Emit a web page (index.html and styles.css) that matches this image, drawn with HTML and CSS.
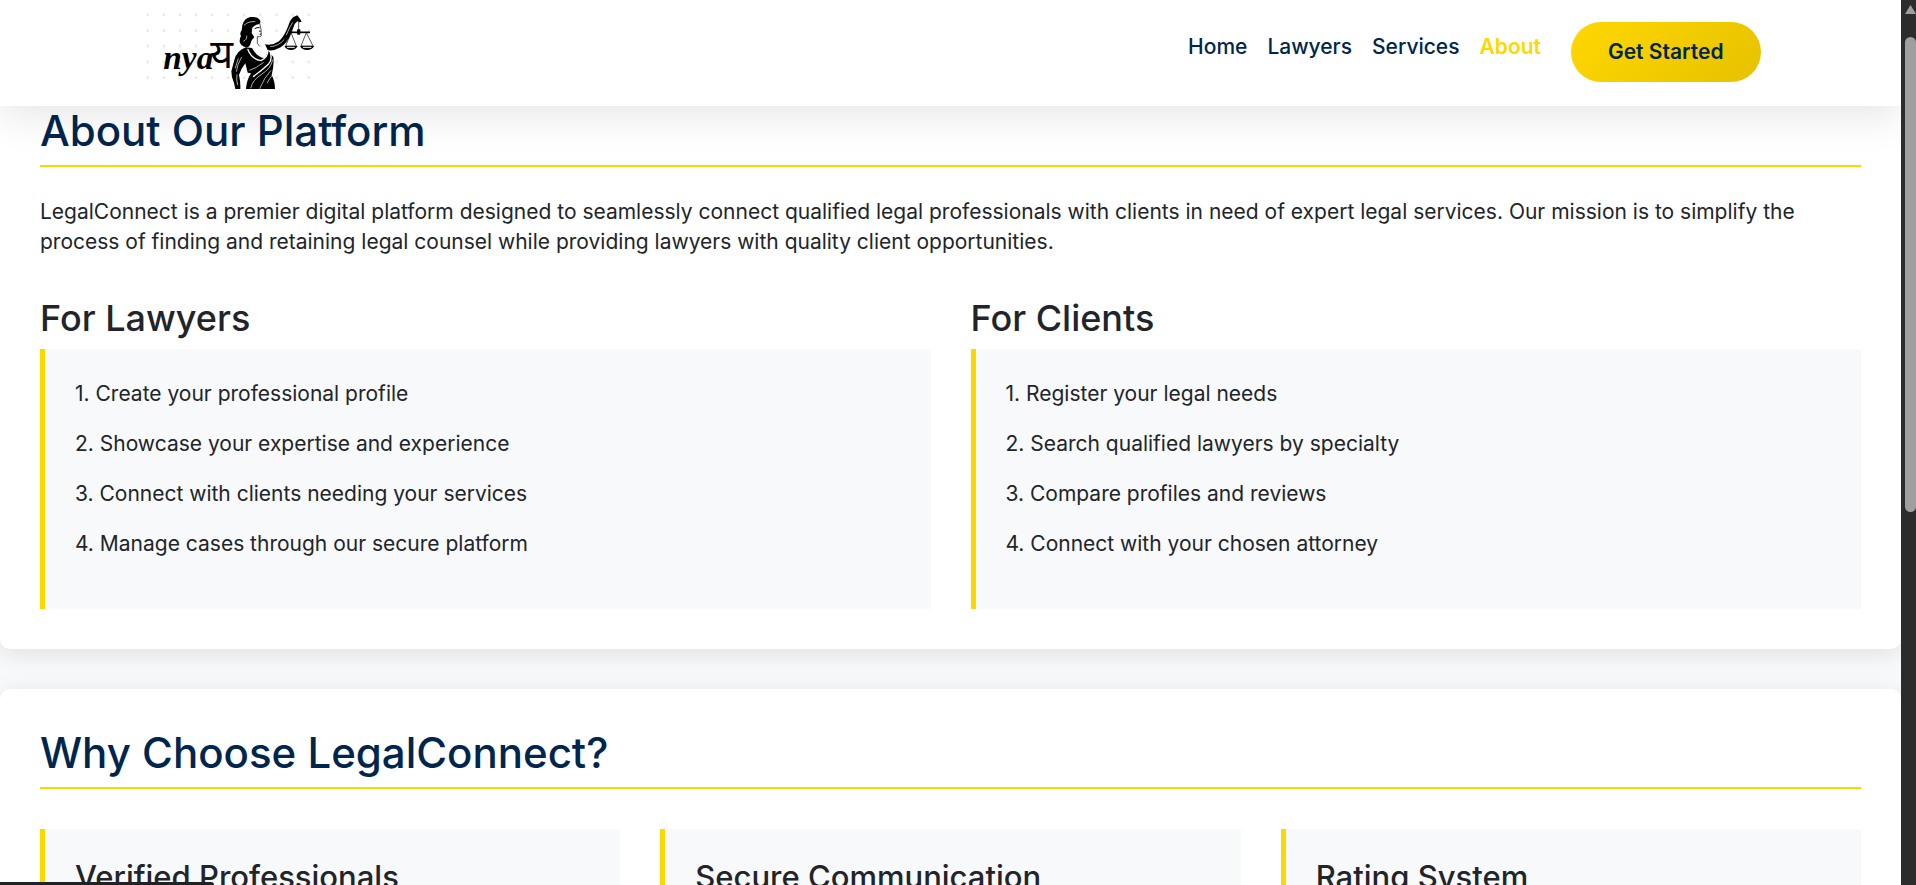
FILE: index.html
```html
<!DOCTYPE html>
<html lang="en">
<head>
<meta charset="utf-8">
<meta name="viewport" content="width=device-width, initial-scale=1">
<title>About - LegalConnect</title>
<link rel="stylesheet" href="styles.css">
</head>
<body>
<div class="page">
  <header class="header">
    <div class="container">
      <a class="brand" href="#" aria-label="nyay home">
        <svg class="logo" viewBox="30 24 540 246" width="180" height="82">
          <defs>
            <pattern id="dots" x="42" y="37" width="48.3" height="47" patternUnits="userSpaceOnUse">
              <circle cx="8" cy="8" r="4" fill="#e6e6e6"/>
            </pattern>
          </defs>
          <rect x="42" y="37" width="500" height="205" fill="url(#dots)"/>
          <text class="logo-script" x="97" y="206">nya</text>
          <text class="logo-deva" x="238" y="204">य</text>
          <path d="M362 84L386 72L391 91L395 98L391 103L390 111L380 114L379 132L392 143L360 150L352 135L364 118Z" fill="#fff"/>
          <path d="M386 70L390 88L391 107Q388 112 379 110L379 130L386 139" fill="none" stroke="#000" stroke-width="2"/>
          <path d="M371 86q8-5 15-3M384 93l5 1M386 103l4-1" fill="none" stroke="#000" stroke-width="3"/>
          <path d="M334 76Q340 54 358 51Q379 49 386 59Q391 66 385 72Q371 74 364 83L362 99L370 112Q361 119 359 130Q356 143 345 142Q329 138 326 126Q325 116 330 108Q325 101 332 91Z"/>
          <path d="M339 76Q352 63 373 65M337 124Q349 119 347 107" fill="none" stroke="#fff" stroke-width="2"/>
          <path d="M345 142Q318 151 310 180L301 214Q301 232 309 249L313 267L328 267Q329 246 324 225Q330 206 343 190L350 218L360 220Q347 240 345 267L432 267Q432 244 422 225Q430 195 427 171L410 150L402 133Q425 137 444 124Q461 107 472 77Q478 59 486 52L499 46L508 58L512 65L505 67L499 64L491 72L480 101Q469 128 449 142Q431 153 412 151L402 174Q380 174 363 144Z"/>
          <path d="M350 147Q362 178 390 182Q410 174 411 151M418 158Q425 179 412 193Q391 213 366 230M378 142Q390 149 404 163" fill="none" stroke="#fff" stroke-width="4"/>
          <path d="M322 175Q316 192 313 205M332 171Q319 192 316 215M318 223Q315 240 320 255M355 211Q376 205 398 187M425 179Q420 206 390 224Q365 240 359 265M420 211Q400 232 386 266M428 221Q415 235 408 250M418 140Q442 139 460 118M466 105Q475 82 485 67" fill="none" stroke="#fff" stroke-width="2"/>
          <path d="M503 66V92" fill="none" stroke="#000" stroke-width="2"/>
          <path d="M475 97H537" fill="none" stroke="#000" stroke-width="5"/>
          <rect x="498" y="88" width="10" height="16" rx="3"/>
          <path d="M480 98L464 138H496ZM526 98L510 138H546Z" fill="none" stroke="#000" stroke-width="2"/>
          <path d="M460 138H500Q494 150 480 150Q466 150 460 138ZM507 138H550Q543 150 528 150Q513 150 507 138Z"/>
          <path d="M468 142H491M516 142H541" stroke="#fff" stroke-width="3"/>
        </svg>
      </a>
      <nav class="nav">
        <a href="#">Home</a>
        <a href="#">Lawyers</a>
        <a href="#">Services</a>
        <a class="active" href="#" aria-current="page">About</a>
        <button class="cta" type="button">Get Started</button>
      </nav>
    </div>
  </header>

  <main class="main">
    <section class="panel">
      <h2>About Our Platform</h2>
      <p class="intro">LegalConnect is a premier digital platform designed to seamlessly connect qualified legal professionals with clients in need of expert legal services. Our mission is to simplify the process of finding and retaining legal counsel while providing lawyers with quality client opportunities.</p>
      <div class="grid two">
        <div>
          <h3>For Lawyers</h3>
          <div class="card">
            <p>1. Create your professional profile</p>
            <p>2. Showcase your expertise and experience</p>
            <p>3. Connect with clients needing your services</p>
            <p>4. Manage cases through our secure platform</p>
          </div>
        </div>
        <div>
          <h3>For Clients</h3>
          <div class="card">
            <p>1. Register your legal needs</p>
            <p>2. Search qualified lawyers by specialty</p>
            <p>3. Compare profiles and reviews</p>
            <p>4. Connect with your chosen attorney</p>
          </div>
        </div>
      </div>
    </section>

    <section class="panel">
      <h2>Why Choose LegalConnect?</h2>
      <div class="grid three">
        <div class="card"><h4>Verified Professionals</h4></div>
        <div class="card"><h4>Secure Communication</h4></div>
        <div class="card"><h4>Rating System</h4></div>
      </div>
    </section>
  </main>
</div>
<div class="scrollbar" aria-hidden="true">
  <span class="scroll-arrow"></span>
  <span class="scroll-thumb"></span>
</div>
<div class="status" aria-hidden="true"></div>
</body>
</html>
```
FILE: styles.css
```css
* { box-sizing: border-box; margin: 0; padding: 0; }

body {
  display: flex;
  height: 100vh;
  overflow: hidden;
  background: #2c2c2c;
  color: #212529;
  font-family: Inter, sans-serif;
  font-size: 21px;
  line-height: 30px;
}

.page {
  position: relative;
  flex: 1;
  min-width: 0;
  overflow: hidden;
  background: #f8f9fb;
}

.header {
  position: absolute;
  top: 0;
  left: 0;
  right: 0;
  z-index: 2;
  background: #fff;
  box-shadow: 0 10px 40px rgba(0, 0, 0, 0.1);
}

.container {
  display: flex;
  justify-content: space-between;
  align-items: flex-start;
  max-width: 1650px;
  min-height: 106px;
  margin: 0 auto;
  padding: 8px 15px;
}

.logo { display: block; }

.logo-script {
  font: italic 700 100px "Liberation Serif", serif;
}

.logo-deva {
  font: 118px "Noto Sans Devanagari", "Noto Sans", "DejaVu Sans", sans-serif;
}

.nav {
  display: flex;
  align-items: flex-start;
  gap: 20px;
  padding-top: 14px;
}

.nav a {
  padding: 10px 0;
  color: #00264d;
  font-weight: 500;
  text-decoration: none;
}

.nav .active {
  color: #ffd700;
  font-weight: 600;
}

.cta {
  margin-left: 10px;
  padding: 15px 37px;
  border: 0;
  border-radius: 30px;
  background: linear-gradient(135deg, #ffd700, #e6c200);
  color: #00264d;
  font: 600 21px/30px Inter, sans-serif;
}

.main {
  display: flex;
  flex-direction: column;
  gap: 40px;
  padding-top: 67px;
}

.panel {
  padding: 40px;
  border-radius: 10px;
  background: #fff;
  box-shadow: 0 5px 25px rgba(0, 0, 0, 0.1);
}

h2 {
  padding-bottom: 10px;
  border-bottom: 2px solid #ffd700;
  color: #00264d;
  font-size: 42px;
  font-weight: 500;
  line-height: 48px;
}

h3 {
  margin-bottom: 10px;
  font-size: 36px;
  font-weight: 500;
  line-height: 42px;
}

h4 {
  font-size: 31px;
  font-weight: 500;
  line-height: 36px;
}

.intro { margin-top: 30px; }

.grid {
  display: grid;
  gap: 40px;
  margin-top: 40px;
}

.two { grid-template-columns: 1fr 1fr; }
.three { grid-template-columns: 1fr 1fr 1fr; }

.card {
  padding: 30px;
  border-left: 5px solid #ffd700;
  background: #f8f9fb;
}

.card p { margin-bottom: 20px; }

.scrollbar {
  display: flex;
  flex-direction: column;
  align-items: flex-end;
  gap: 23px;
  width: 15px;
  padding-top: 5px;
  overflow: hidden;
  background: #2c2c2c;
}

.scroll-arrow {
  width: 11px;
  height: 9px;
  background: #9f9f9f;
  clip-path: polygon(50% 0, 100% 100%, 0 100%);
}

.scroll-thumb {
  width: 11px;
  height: 475px;
  border-radius: 6px;
  background: #9f9f9f;
}

.status {
  position: fixed;
  left: 0;
  bottom: 0;
  z-index: 3;
  width: 214px;
  height: 3px;
  border-radius: 0 3px 0 0;
  background: #202124;
}
```
